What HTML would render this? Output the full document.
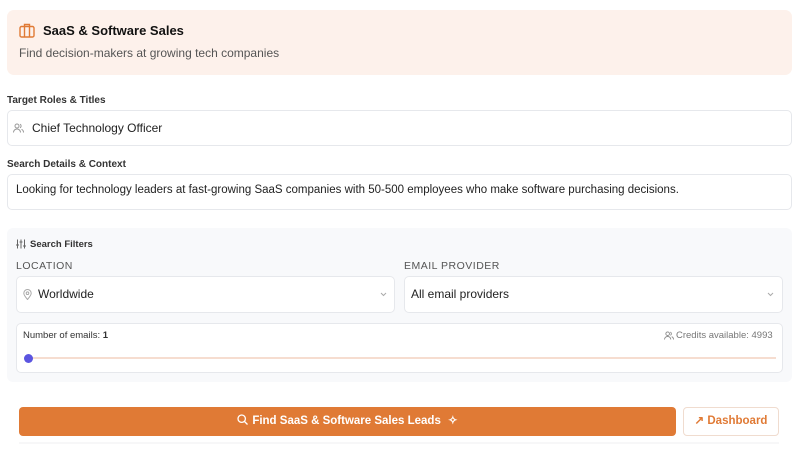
<!DOCTYPE html>
<html><head><style>
*{box-sizing:border-box;margin:0;padding:0}
body{width:800px;height:450px;background:#fff;font-family:"Liberation Sans",sans-serif;position:relative;overflow:hidden;color:#222}
.a{position:absolute}
.box{position:absolute;background:#fff;border:1px solid #e6e8ec;border-radius:5px}
.lbl{position:absolute;font-size:10px;font-weight:bold;color:#333}
.cap{position:absolute;font-size:10.5px;color:#555;letter-spacing:.5px}
</style></head><body>
<div class="a" style="left:7px;top:10px;width:785px;height:65px;background:#fdf1eb;border-radius:7px"></div>
<svg class="a" style="left:19px;top:23px" width="16" height="15" viewBox="0 0 16 15" fill="none" stroke="#e07a35" stroke-width="1.4"><rect x="1" y="3.5" width="14" height="10.5" rx="1.5"/><path d="M5.5 3.5V1.5h5v2M5.5 3.5v10.5M10.5 3.5v10.5"/></svg>
<div class="a" style="left:43px;top:23px;font-size:13px;font-weight:bold;color:#111">SaaS &amp; Software Sales</div>
<div class="a" style="left:19px;top:46px;font-size:12px;color:#555">Find decision-makers at growing tech companies</div>

<div class="lbl" style="left:7px;top:95px">Target Roles &amp; Titles</div>
<div class="box" style="left:7px;top:110px;width:785px;height:36px"></div>
<svg class="a" style="left:13px;top:123px" width="11" height="10" viewBox="0 0 11 10" fill="none" stroke="#999" stroke-width="1"><circle cx="4" cy="3" r="2"/><path d="M0.5 9.5c0-2 1.5-3.5 3.5-3.5s3.5 1.5 3.5 3.5M7 1.2a2 2 0 010 3.6M8.5 6.3c1.2.5 2 1.7 2 3.2"/></svg>
<div class="a" style="left:32px;top:121px;font-size:12px;color:#222">Chief Technology Officer</div>

<div class="lbl" style="left:7px;top:159px">Search Details &amp; Context</div>
<div class="box" style="left:7px;top:174px;width:785px;height:36px"></div>
<div class="a" style="left:16px;top:184px;font-size:11.5px;color:#222">Looking for technology leaders at fast-growing SaaS companies with 50-500 employees who make software purchasing decisions.</div>

<div class="a" style="left:7px;top:228px;width:785px;height:154px;background:#f8f9fb;border-radius:6px"></div>
<svg class="a" style="left:16px;top:239px" width="10" height="10" viewBox="0 0 10 10" fill="none" stroke="#666" stroke-width="1"><path d="M1.5 0.5v9M5 0.5v9M8.5 0.5v9"/><path d="M0 6h3M3.5 3h3M7 7h3"/></svg>
<div class="lbl" style="left:30px;top:239px;font-size:9.5px">Search Filters</div>
<div class="cap" style="left:16px;top:260px">LOCATION</div>
<div class="cap" style="left:404px;top:260px">EMAIL PROVIDER</div>
<div class="box" style="left:16px;top:276px;width:379px;height:37px"></div>
<svg class="a" style="left:23px;top:289px" width="9" height="11" viewBox="0 0 9 11" fill="none" stroke="#aaa" stroke-width="1"><path d="M4.5 10.5C2 7.5.8 5.8.8 4.2a3.7 3.7 0 017.4 0c0 1.6-1.2 3.3-3.7 6.3z"/><circle cx="4.5" cy="4.2" r="1.3"/></svg>
<div class="a" style="left:38px;top:287px;font-size:12px">Worldwide</div>
<svg class="a" style="left:380px;top:292px" width="7" height="5" viewBox="0 0 7 5" fill="none" stroke="#aaa" stroke-width="1"><path d="M1 1l2.5 2.5L6 1"/></svg>
<div class="box" style="left:404px;top:276px;width:379px;height:37px"></div>
<div class="a" style="left:411px;top:287px;font-size:12px">All email providers</div>
<svg class="a" style="left:767px;top:292px" width="7" height="5" viewBox="0 0 7 5" fill="none" stroke="#aaa" stroke-width="1"><path d="M1 1l2.5 2.5L6 1"/></svg>
<div class="box" style="left:16px;top:323px;width:767px;height:50px"></div>
<div class="a" style="left:23px;top:330px;font-size:9.5px;color:#333">Number of emails: <b>1</b></div>
<svg class="a" style="left:664px;top:331px" width="10" height="9" viewBox="0 0 11 10" fill="none" stroke="#888" stroke-width="1"><circle cx="4" cy="3" r="2"/><path d="M0.5 9.5c0-2 1.5-3.5 3.5-3.5s3.5 1.5 3.5 3.5M7 1.2a2 2 0 010 3.6M8.5 6.3c1.2.5 2 1.7 2 3.2"/></svg>
<div class="a" style="left:676px;top:330px;font-size:9.5px;color:#777">Credits available: 4993</div>
<div class="a" style="left:30px;top:357px;width:746px;height:2px;background:#f6ddd0"></div>
<div class="a" style="left:24px;top:354px;width:9px;height:9px;border-radius:50%;background:#5b55e0"></div>

<div class="a" style="left:19px;top:407px;width:657px;height:29px;background:#e07a35;border-radius:4px;color:#fff;font-size:11.5px;font-weight:bold;text-align:center;line-height:29px">
<svg width="11" height="11" viewBox="0 0 11 11" fill="none" stroke="#fff" stroke-width="1.3" style="vertical-align:-1px;margin-right:4px"><circle cx="4.7" cy="4.7" r="3.7"/><path d="M7.5 7.5l3 3"/></svg>Find SaaS &amp; Software Sales Leads <span style="margin-left:4px">✧</span></div>
<div class="a" style="left:683px;top:407px;width:96px;height:29px;border:1px solid #f0dccf;border-radius:4px;color:#e07a35;font-size:11.5px;font-weight:bold;text-align:center;line-height:27px">↗ Dashboard</div>
<div class="a" style="left:19px;top:442px;width:760px;height:2px;background:#f7f7f8"></div>
</body></html>
